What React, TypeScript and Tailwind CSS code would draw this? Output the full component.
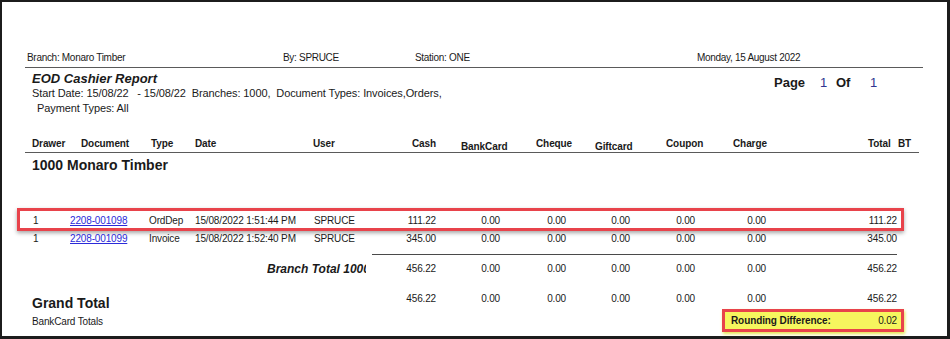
import React from "react";

const font = { fontFamily: '"Liberation Sans", Arial, sans-serif' };

type Row = {
  drawer: string;
  doc: string;
  type: string;
  date: string;
  user: string;
  vals: string[];
};

const rows: Row[] = [
  { drawer: "1", doc: "2208-001098", type: "OrdDep", date: "15/08/2022 1:51:44 PM", user: "SPRUCE", vals: ["111.22", "0.00", "0.00", "0.00", "0.00", "0.00", "111.22"] },
  { drawer: "1", doc: "2208-001099", type: "Invoice", date: "15/08/2022 1:52:40 PM", user: "SPRUCE", vals: ["345.00", "0.00", "0.00", "0.00", "0.00", "0.00", "345.00"] },
];

function Values({ vals }: { vals: string[] }) {
  return (
    <>
      <div className="w-[60px] text-right">{vals[0]}</div>
      <div className="w-[64px] text-right">{vals[1]}</div>
      <div className="w-[66px] text-right">{vals[2]}</div>
      <div className="w-[64px] text-right">{vals[3]}</div>
      <div className="w-[65px] text-right">{vals[4]}</div>
      <div className="w-[71px] text-right">{vals[5]}</div>
      <div className="w-[131px] text-right">{vals[6]}</div>
    </>
  );
}

function DataRow({ r }: { r: Row }) {
  return (
    <div className="flex text-[10px] leading-[12px] text-[#1a1a1a] whitespace-nowrap tracking-[-0.15px]">
      <div className="w-[37px]">{r.drawer}</div>
      <div className="w-[79px]">
        <span className="text-[#2b2bd9] underline">{r.doc}</span>
      </div>
      <div className="w-[46px]">{r.type}</div>
      <div className="w-[119px]">{r.date}</div>
      <div className="w-[62px]">{r.user}</div>
      <Values vals={r.vals} />
    </div>
  );
}

export default function App() {
  return (
    <div
      style={font}
      className="w-[950px] h-[339px] bg-white border-[#1c1c1c] border-t-2 border-l-2 border-r-[3px] border-b-[3px] overflow-hidden text-[#1a1a1a]"
    >
      <div className="flex flex-col">
        {/* Top info row */}
        <div className="mt-[50px] flex pl-[25px] text-[10px] leading-[12px] tracking-[-0.3px] whitespace-nowrap">
          <div className="w-[256px]">Branch: Monaro Timber</div>
          <div className="w-[132px]">By: SPRUCE</div>
          <div className="w-[282px]">Station: ONE</div>
          <div>Monday, 15 August 2022</div>
        </div>
        <div className="mt-[3px] ml-[23px] w-[898px] h-px bg-[#5a5a5a]" />

        {/* Title block */}
        <div className="mt-[4px] flex items-start pl-[30px]">
          <div className="w-[742px] flex flex-col whitespace-nowrap">
            <div className="text-[13px] leading-[14px] font-bold italic">EOD Cashier Report</div>
            <div className="mt-px text-[11px] leading-[13px] tracking-[-0.1px]">
              Start Date: 15/08/22&nbsp;&nbsp; - 15/08/22&nbsp; Branches: 1000,&nbsp; Document Types: Invoices,Orders,
            </div>
            <div className="mt-[2px] pl-[5px] text-[11px] leading-[13px] tracking-[-0.1px]">Payment Types: All</div>
          </div>
          <div className="mt-[3px] flex text-[13px] leading-[15px] whitespace-nowrap">
            <div className="w-[46px] font-bold">Page</div>
            <div className="w-[16px] text-[#2f3590]">1</div>
            <div className="w-[34px] font-bold">Of</div>
            <div className="text-[#2f3590]">1</div>
          </div>
        </div>

        {/* Column header */}
        <div className="mt-[23px] h-[14px] flex items-start pl-[30px] text-[10px] leading-[12px] font-bold whitespace-nowrap tracking-[-0.1px]">
          <div className="w-[49px]">Drawer</div>
          <div className="w-[70px]">Document</div>
          <div className="w-[44px]">Type</div>
          <div className="w-[118px]">Date</div>
          <div className="w-[63px]">User</div>
          <div className="w-[60px] text-right">Cash</div>
          <div className="w-[25px]" />
          <div className="w-[75px] mt-[3px]">BankCard</div>
          <div className="w-[59px]">Cheque</div>
          <div className="w-[71px] mt-[3px]">Giftcard</div>
          <div className="w-[67px]">Coupon</div>
          <div className="w-[135px]">Charge</div>
          <div className="w-[30px]">Total</div>
          <div>BT</div>
        </div>
        <div className="ml-[23px] w-[894px] h-px bg-[#5a5a5a]" />

        <div className="mt-[4px] pl-[30px] text-[14px] leading-[16px] font-bold whitespace-nowrap">1000 Monaro Timber</div>

        {/* Highlighted row */}
        <div className="mt-[35px] ml-[15px] w-[887px] h-[23px] border-[3px] border-[#e8434b] shadow-[0_2px_4px_rgba(0,0,0,0.35)] pt-[4px] pl-[13px]">
          <DataRow r={rows[0]} />
        </div>

        <div className="mt-[2px] pl-[31px]">
          <DataRow r={rows[1]} />
        </div>

        <div className="mt-[9px] ml-[370px] w-[525px] h-px bg-[#4a4a4a]" />

        {/* Branch total */}
        <div className="mt-[8px] flex items-start text-[10px] leading-[12px] whitespace-nowrap tracking-[-0.15px]">
          <div className="w-[265px]" />
          <div className="w-[99px] overflow-hidden text-[12px] leading-[12px] font-bold italic tracking-normal">Branch Total 1000</div>
          <div className="w-[10px]" />
          <Values vals={["456.22", "0.00", "0.00", "0.00", "0.00", "0.00", "456.22"]} />
        </div>

        {/* Grand total */}
        <div className="mt-[18px] flex items-start text-[10px] leading-[12px] whitespace-nowrap tracking-[-0.15px]">
          <div className="w-[30px]" />
          <div className="w-[344px] mt-[2px] text-[14px] leading-[16px] font-bold tracking-normal">Grand Total</div>
          <Values vals={["456.22", "0.00", "0.00", "0.00", "0.00", "0.00", "456.22"]} />
        </div>

        {/* Bottom */}
        <div className="-mt-[2px] flex items-start">
          <div className="w-[720px] pl-[30px] mt-[7px] text-[10px] leading-[12px] whitespace-nowrap tracking-[-0.15px]">BankCard Totals</div>
          <div className="w-[182px] h-[23px] border-[3px] border-[#e8434b] bg-[#f6f65e] shadow-[1px_2px_3px_#e6e650] flex items-center justify-between pl-[6px] pr-[4px] text-[10px] leading-[12px] whitespace-nowrap">
            <span className="font-bold tracking-[-0.1px]">Rounding Difference:</span>
            <span className="tracking-[-0.15px]">0.02</span>
          </div>
        </div>
      </div>
    </div>
  );
}
